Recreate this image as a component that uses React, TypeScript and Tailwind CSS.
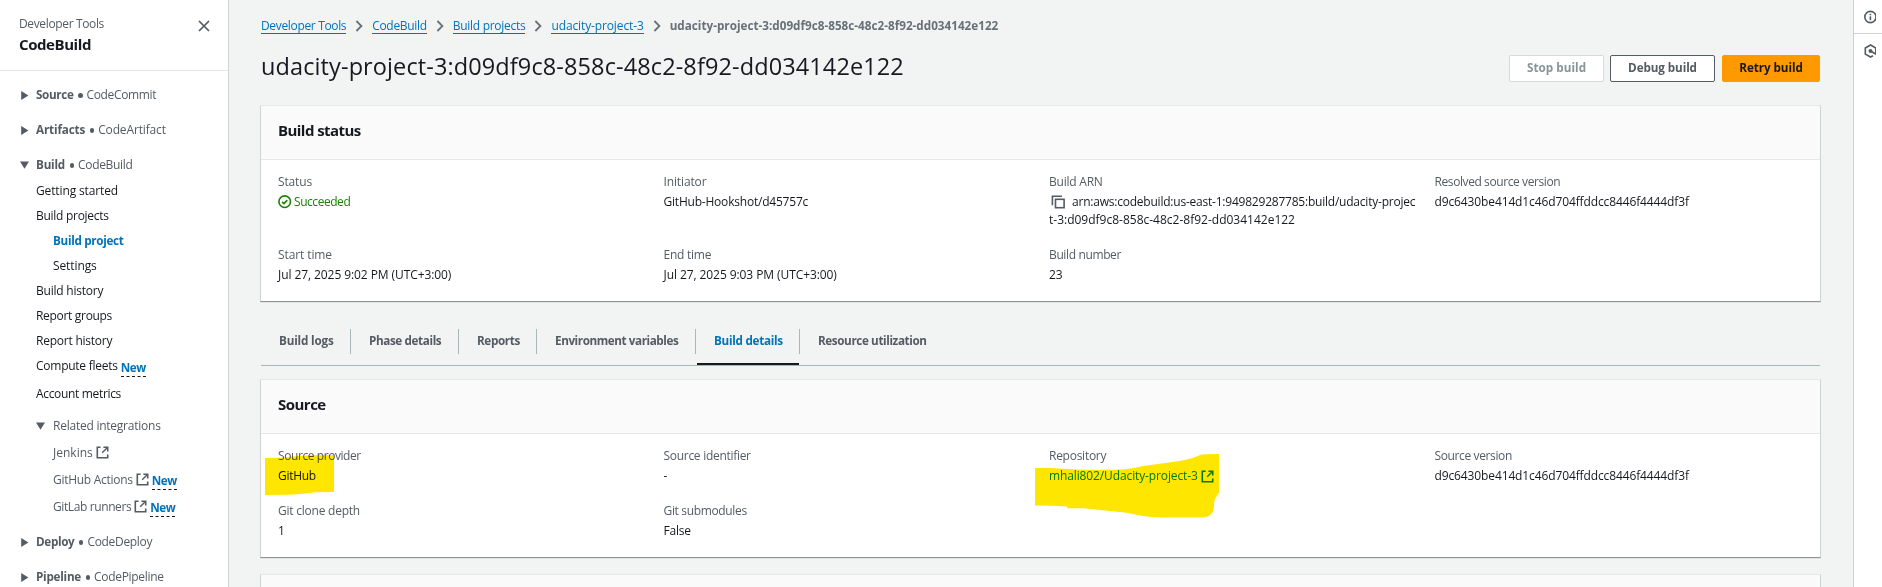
import type { ReactNode } from "react";

/* ---------- icons ---------- */

function CaretRight() {
  return (
    <svg className="mt-px mr-2 h-[9px] w-[8px] shrink-0" viewBox="0 0 8 9">
      <path d="M0.2 0 L7.4 4.5 L0.2 9 Z" fill="#545b64" />
    </svg>
  );
}

function CaretDown() {
  return (
    <svg className="mt-px h-[8px] w-[9px] shrink-0" viewBox="0 0 9 8">
      <path d="M0 0.5 H9 L4.5 7.7 Z" fill="#545b64" />
    </svg>
  );
}

function External({ className = "" }: { className?: string }) {
  return (
    <svg className={"h-[13px] w-[13px] shrink-0 " + className} viewBox="0 0 13 13" fill="none" stroke="currentColor" strokeWidth="1.6">
      <path d="M4.6 1.3 H1.3 V11.7 H11.7 V8.6" />
      <path d="M7.4 1.3 H11.7 V5.6" />
      <path d="M11.4 1.6 L6.2 6.8" strokeWidth="1.4" />
    </svg>
  );
}

function Chevron() {
  return (
    <svg className="mx-[9px] h-3 w-2 shrink-0" viewBox="0 0 8 12" fill="none" stroke="#687078" strokeWidth="1.8">
      <path d="M1.4 1 L6.4 6 L1.4 11" />
    </svg>
  );
}

function CheckCircle() {
  return (
    <svg className="mr-[2px] h-[14px] w-[14px] shrink-0" viewBox="0 0 14 14" fill="none" stroke="#1d8102">
      <circle cx="6.7" cy="6.7" r="5.8" strokeWidth="1.6" />
      <path d="M4.1 6.8 L6 8.6 L9.3 5.1" strokeWidth="1.6" />
    </svg>
  );
}

function CopyIcon() {
  return (
    <svg className="mr-[7px] ml-[2px] inline-block h-[14px] w-[14px] shrink-0" viewBox="0 0 14 14" fill="none" stroke="#545b64" strokeWidth="1.6">
      <path d="M1.4 10.2 V1.2 H11" />
      <rect x="4.5" y="4.3" width="8.6" height="8.4" />
    </svg>
  );
}

/* ---------- sidebar ---------- */

function Section({ title, titleClass, name, nameClass, open }: { title: string; titleClass: string; name: string; nameClass: string; open?: boolean }) {
  return (
    <div className="flex h-[35px] shrink-0 items-center pl-[21px] text-[#545b64]">
      {open ? <span className="-ml-px mr-[7px] flex"><CaretDown /></span> : <span className="-mr-px flex"><CaretRight /></span>}
      <span className={"text-[11.7px] font-bold " + titleClass}>{title}</span>
      <span className="mt-[2px] mr-1 ml-[4.5px] h-[4.5px] w-[4.5px] rounded-full bg-[#545b64]" />
      <span className={nameClass}>{name}</span>
    </div>
  );
}

function NavItem({ children, className = "" }: { children: ReactNode; className?: string }) {
  return <div className={"flex h-[25px] shrink-0 items-center pl-9 " + className}>{children}</div>;
}

function NewTag({ className = "" }: { className?: string }) {
  return (
    <span className={"h-[20px] border-b border-dashed border-[#16191f] text-[11.7px] leading-[20px] font-bold tracking-[-0.44px] text-[#0073bb] " + className}>
      New
    </span>
  );
}

function Sidebar() {
  return (
    <aside className="flex w-[229px] shrink-0 flex-col border-r border-[#ccd1d1] bg-white">
      <header className="flex h-[71px] shrink-0 justify-between border-b border-[#e6e8e8] pl-[19px]">
        <div className="flex flex-col pt-[14px]">
          <span className="h-[19px] leading-[19px] tracking-[-0.36px] text-[#545b64]">Developer Tools</span>
          <span className="h-[22px] text-[15px] leading-[22px] font-bold tracking-[-0.42px]">CodeBuild</span>
        </div>
        <svg className="mt-5 mr-[18px] h-3 w-3" viewBox="0 0 12 12" stroke="#545b64" strokeWidth="1.7">
          <path d="M1 1 L11 11 M11 1 L1 11" />
        </svg>
      </header>
      <nav className="flex flex-col pt-[6px]">
        <Section title="Source" titleClass="tracking-[-0.34px]" name="CodeCommit" nameClass="tracking-[-0.35px]" />
        <Section title="Artifacts" titleClass="tracking-[-0.15px]" name="CodeArtifact" nameClass="tracking-[-0.14px]" />
        <Section title="Build" titleClass="tracking-[-0.21px]" name="CodeBuild" nameClass="tracking-[-0.32px]" open />
        <NavItem className="-mt-1 tracking-[-0.13px]">Getting started</NavItem>
        <NavItem className="tracking-[-0.28px]">Build projects</NavItem>
        <NavItem className="pl-[53px] text-[11.7px] font-bold tracking-[-0.31px] text-[#0073bb]">Build project</NavItem>
        <NavItem className="pl-[53px] tracking-[-0.1px]">Settings</NavItem>
        <NavItem className="tracking-[-0.22px]">Build history</NavItem>
        <NavItem className="tracking-[-0.31px]">Report groups</NavItem>
        <NavItem className="tracking-[-0.23px]">Report history</NavItem>
        <NavItem>
          <span className="tracking-[-0.25px]">Compute fleets</span>
          <NewTag className="mt-[2px] ml-[3px]" />
        </NavItem>
        <NavItem className="mt-[3px] tracking-[-0.33px]">Account metrics</NavItem>
        <div className="mt-[6px] flex h-[27px] items-center pl-9 text-[#545b64]">
          <CaretDown />
          <span className="ml-2 tracking-[-0.24px]">Related integrations</span>
        </div>
        <div className="flex h-[27px] items-center pl-[53px] text-[#545b64]">
          <span>Jenkins</span>
          <External className="ml-[3px]" />
        </div>
        <div className="flex h-[27px] items-center pl-[53px] text-[#545b64]">
          <span className="tracking-[-0.28px]">GitHub Actions</span>
          <External className="ml-[3px]" />
          <NewTag className="ml-[3px]" />
        </div>
        <div className="flex h-[27px] items-center pl-[53px] text-[#545b64]">
          <span className="tracking-[-0.39px]">GitLab runners</span>
          <External className="ml-[3px]" />
          <NewTag className="ml-[3px]" />
        </div>
        <div className="mt-1 flex flex-col">
          <Section title="Deploy" titleClass="tracking-[-0.33px]" name="CodeDeploy" nameClass="tracking-[-0.32px]" />
          <Section title="Pipeline" titleClass="tracking-[-0.24px]" name="CodePipeline" nameClass="tracking-[-0.3px]" />
        </div>
      </nav>
    </aside>
  );
}

/* ---------- main column ---------- */

function Crumb({ children, className = "" }: { children: string; className?: string }) {
  return <a className={"h-[16px] border-b border-[#0073bb] leading-[16px] text-[#0073bb] " + className}>{children}</a>;
}

function Panel({ title, titleClass = "", children }: { title: string; titleClass?: string; children: ReactNode }) {
  return (
    <section className="shrink-0 border border-x-[#cfd3d3] border-t-[#e6e9e9] border-b-[#8b9393] bg-white shadow-[0_1px_0_0_#e3e6e6]">
      <h2 className={"flex h-[54px] items-center border-b border-[#e6e8e8] bg-[#fafafa] pb-[5px] pl-[17px] text-[15px] font-bold " + titleClass}>{title}</h2>
      <div className="grid grid-cols-4 gap-y-4 pt-3 pb-[17px] pl-[17px]">{children}</div>
    </section>
  );
}

function Field({ label, labelClass = "", valueClass = "", children, mark }: { label: string; labelClass?: string; valueClass?: string; children: ReactNode; mark?: ReactNode }) {
  return (
    <div className="relative">
      <div className={"h-[21px] leading-[20px] text-[#545b64] " + labelClass}>{label}</div>
      <div className={"leading-[18px] whitespace-nowrap " + valueClass}>{children}</div>
      {mark}
    </div>
  );
}

function Tab({ children, className, active }: { children: string; className: string; active?: boolean }) {
  return (
    <div className={"relative flex h-[25px] items-center border-[#aab7b8] pb-px pl-[18px] text-[11.7px] font-bold " + (active ? "text-[#0073bb] " : "text-[#545b64] ") + className}>
      {children}
      {active && <span className="absolute -bottom-[11px] left-px h-[2px] w-[102px] bg-[#16191f]" />}
    </div>
  );
}

export default function App() {
  return (
    <div className="flex h-[587px] w-[1882px] overflow-hidden bg-[#f2f3f3] font-['Open_Sans',sans-serif] text-[12px] text-[#16191f]">
      <Sidebar />

      <main className="flex w-[1624px] shrink-0 flex-col pr-[32px] pl-[31px]">
        <nav className="mt-[18px] flex h-4 shrink-0 items-center pl-px">
          <Crumb className="tracking-[-0.34px]">Developer Tools</Crumb>
          <Chevron />
          <Crumb className="tracking-[-0.32px]">CodeBuild</Crumb>
          <Chevron />
          <Crumb className="tracking-[-0.28px]">Build projects</Crumb>
          <Chevron />
          <Crumb className="tracking-[-0.12px]">udacity-project-3</Crumb>
          <Chevron />
          <span className="text-[11.7px] font-bold tracking-[0.01px] text-[#687078]">udacity-project-3:d09df9c8-858c-48c2-8f92-dd034142e122</span>
        </nav>

        <div className="mt-[16px] mr-px ml-px flex h-[55px] shrink-0 items-start justify-between">
          <h1 className="text-[23.5px] leading-[32px] tracking-[0.11px]">udacity-project-3:d09df9c8-858c-48c2-8f92-dd034142e122</h1>
          <div className="mt-[5px] flex h-[27px] text-center text-[11.7px] leading-[23px] font-bold">
            <button className="w-[95px] rounded-[2px] border border-[#d5dbdb] bg-white pb-[2px] tracking-[0.04px] text-[#879596]">Stop build</button>
            <button className="ml-[6px] w-[105px] rounded-[2px] border border-[#545b64] bg-white pb-[2px] tracking-[-0.1px] text-[#545b64]">Debug build</button>
            <button className="ml-[7px] w-[98px] rounded-[2px] border border-[#ff9900] bg-[#ff9900] pb-[2px] tracking-[-0.07px]">Retry build</button>
          </div>
        </div>

        <Panel title="Build status" titleClass="tracking-[-0.55px]">
          <Field label="Status" labelClass="tracking-[-0.15px]" valueClass="flex items-center text-[#1d8102] tracking-[-0.45px]">
            <CheckCircle />
            Succeeded
          </Field>
          <Field label="Initiator" labelClass="tracking-[-0.13px]" valueClass="tracking-[-0.21px]">GitHub-Hookshot/d45757c</Field>
          <Field label="Build ARN" labelClass="tracking-[-0.22px]" valueClass="h-9 overflow-hidden">
            <div className="flex h-[18px] items-center">
              <CopyIcon />
              <span className="tracking-[-0.22px]">arn:aws:codebuild:us-east-1:949829287785:build/udacity-projec</span>
            </div>
            <div>t-3:d09df9c8-858c-48c2-8f92-dd034142e122</div>
          </Field>
          <Field label="Resolved source version" labelClass="tracking-[-0.41px]" valueClass="tracking-[-0.12px]">d9c6430be414d1c46d704ffddcc8446f4444df3f</Field>
          <Field label="Start time" labelClass="tracking-[-0.1px]" valueClass="tracking-[-0.08px]">Jul 27, 2025 9:02 PM (UTC+3:00)</Field>
          <Field label="End time" labelClass="tracking-[-0.24px]" valueClass="tracking-[-0.08px]">Jul 27, 2025 9:03 PM (UTC+3:00)</Field>
          <Field label="Build number" labelClass="tracking-[-0.37px]">23</Field>
        </Panel>

        <div className="mx-px mt-[27px] mb-[13px] flex h-[37px] shrink-0 border-b border-[#aab7b8]">
          <Tab className="w-[90px] border-r tracking-[-0.17px]">Build logs</Tab>
          <Tab className="w-[108px] border-r tracking-[-0.38px]">Phase details</Tab>
          <Tab className="w-[78px] border-r tracking-[-0.36px]">Reports</Tab>
          <Tab className="w-[159px] border-r tracking-[-0.42px]">Environment variables</Tab>
          <Tab className="w-[104px] border-r tracking-[-0.28px]" active>Build details</Tab>
          <Tab className="tracking-[-0.39px]">Resource utilization</Tab>
        </div>

        <Panel title="Source" titleClass="tracking-[-0.52px]">
          <Field
            label="Source provider"
            labelClass="tracking-[-0.42px]"
            valueClass="tracking-[-0.3px]"
            mark={
              <svg className="pointer-events-none absolute top-2 -left-[14px] h-[42px] w-[72px] mix-blend-multiply" viewBox="264 454 72 42">
                <path d="M265 458 L280 457.7 Q300 455.3 315 455.2 L334 455 V492 L315 492.3 Q300 494.3 288 494.8 L265 495 Z" fill="#ffe600" />
              </svg>
            }
          >
            GitHub
          </Field>
          <Field label="Source identifier" labelClass="tracking-[-0.29px]">-</Field>
          <Field
            label="Repository"
            labelClass="tracking-[-0.26px]"
            valueClass="flex items-center text-[#008abb] tracking-[-0.12px]"
            mark={
              <svg className="pointer-events-none absolute top-[7px] -left-[15px] h-[66px] w-[187px] mix-blend-multiply" viewBox="1034 453 187 66">
                <path
                  d="M1035 468 H1048 Q1090 470.5 1122 469.6 Q1135 468 1143 466 L1167 462.7 Q1182 461 1192 458.3 Q1200 454.5 1204 454.2 L1219 454 V492.7 L1215 499 C1213 504 1215 510 1212 513 Q1209 517.3 1203 517.4 H1160 Q1143 517 1127 512.8 L1083 508.3 H1067.4 L1067 506.6 Q1050 505.5 1035 505.6 Z"
                  fill="#ffe600"
                />
              </svg>
            }
          >
            mhali802/Udacity-project-3
            <External className="ml-[3px]" />
          </Field>
          <Field label="Source version" labelClass="tracking-[-0.37px]" valueClass="tracking-[-0.12px]">d9c6430be414d1c46d704ffddcc8446f4444df3f</Field>
          <Field label="Git clone depth" labelClass="tracking-[-0.23px]">1</Field>
          <Field label="Git submodules" labelClass="tracking-[-0.34px]" valueClass="tracking-[-0.21px]">False</Field>
        </Panel>

        <section className="mt-4 h-10 shrink-0 border border-x-[#cfd3d3] border-t-[#e6e9e9] bg-[#fafafa]" />
      </main>

      <aside className="flex w-[29px] shrink-0 flex-col border-l border-[#ccd1d1] bg-white">
        <div className="flex h-[34px] shrink-0 items-center border-b border-[#d0d4d4] pl-[10px]">
          <svg className="h-[14px] w-[12px]" viewBox="0 0 12 14" fill="none" stroke="#545b64">
            <circle cx="6.4" cy="7" r="5.6" strokeWidth="1.6" />
            <path d="M6.4 6.3 V10.2" strokeWidth="1.6" />
            <path d="M6.4 3.8 V5.3" strokeWidth="1.6" />
          </svg>
        </div>
        <div className="flex h-[33px] items-center pl-[10px]">
          <svg className="h-[14px] w-[12px]" viewBox="0 0 12 14" fill="none" stroke="#545b64">
            <path d="M9 11.8 L6.6 13 L1.3 10.1 V4 L6.6 1 L11.8 4 V9.4" strokeWidth="1.6" />
            <circle cx="6.5" cy="7" r="2" fill="#545b64" stroke="none" />
            <path d="M6.5 7 L12 10.2" strokeWidth="1.6" />
          </svg>
        </div>
      </aside>
    </div>
  );
}
